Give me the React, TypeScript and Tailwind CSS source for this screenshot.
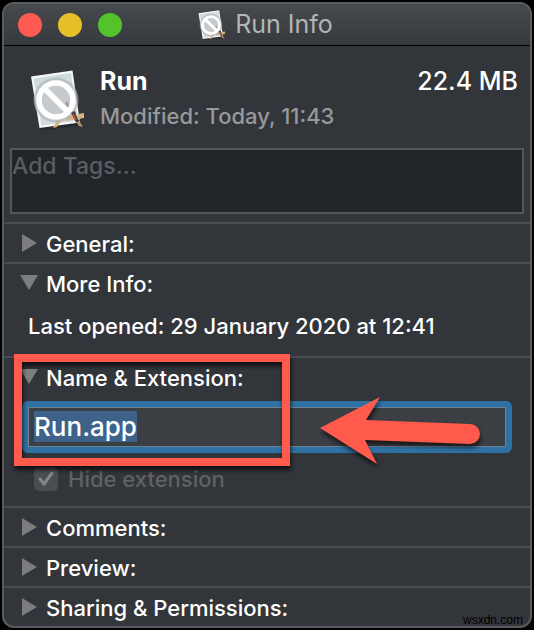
import { useEffect, useRef, type ReactNode } from "react";

function AppIcon({ className }: { className: string }) {
  return (
    <svg viewBox="0 0 60 64" className={className} aria-hidden="true">
      <path d="M3 9.500 44 3.500 52 56 12 61Z" fill="#111417" opacity=".35" transform="translate(1 1.500)" />
      <path d="M3 8.500 44.500 2.500 52 54.500 11.500 60Z" fill="#f5f7f8" />
      <path d="M5.500 10.500 43 5 49.500 52.500 13.500 57.500Z" fill="#cfdbe1" />
      <path d="M25 60 31 49 35 50 29 59ZM39 48 56 45V50L38 53Z" fill="#d9b27c" />
      <circle cx="28" cy="32" r="22.500" fill="#aeb3b6" opacity=".65" />
      <circle cx="28" cy="32" r="17" fill="#c6cacd" />
      <path d="m38 34 7 12" stroke="#a39a9b" strokeWidth="2.500" />
      <path d="m32 48 4-7" stroke="#c9b8a0" strokeWidth="2" />
      <circle cx="28" cy="32" r="17" fill="none" stroke="#fff" strokeWidth="5.500" />
      <path d="M16 20 40 44" stroke="#fff" strokeWidth="5.500" />
      <path d="m45 44 5 10" stroke="#493d3c" strokeWidth="4" />
      <path d="m45 46 3 6" stroke="#c8563e" strokeWidth="1.500" />
      <path d="m48 46 3 6" stroke="#dde3e6" strokeWidth="1" />
      <path d="m48 54 4 0 3 5-4-1Z" fill="#b59464" />
    </svg>
  );
}

function Section({ title, open = false, children }: { title: string; open?: boolean; children?: ReactNode }) {
  return (
    <section className="relative border-t-2 border-[#4a4d51]">
      <h2>
        <button type="button" aria-expanded={open} className="flex h-[38px] w-full items-center gap-2 pl-4 text-left text-[22px] font-medium leading-7">
          <svg viewBox="0 0 18 18" className="size-[18px] shrink-0" fill="#7d7d7e" aria-hidden="true">
            {open ? <path d="M0 1h18L9 16Z" /> : <path d="M2 0v18L17 9Z" />}
          </svg>
          <span className="pt-0.5">{title}</span>
        </button>
      </h2>
      {children}
    </section>
  );
}

export default function App() {
  const nameRef = useRef<HTMLInputElement>(null);

  useEffect(() => {
    nameRef.current?.focus();
    nameRef.current?.select();
  }, []);

  return (
    <div className="min-h-screen bg-black p-0.5 font-['Inter','Liberation_Sans',sans-serif] text-white">
      <main className="relative overflow-hidden rounded-xl border-2 border-[#5b5c60] bg-[#323539]">
        <header className="relative flex h-[42px] items-center justify-center border-b border-black bg-linear-to-b from-[#464a4d] to-[#36393d] pr-1">
          <div className="absolute left-3.5 flex gap-4">
            <button type="button" aria-label="Close" className="size-6 rounded-full bg-[#ff5a52]" />
            <button type="button" aria-label="Minimise" className="size-6 rounded-full bg-[#e6c029]" />
            <button type="button" aria-label="Zoom" className="size-6 rounded-full bg-[#53c22b]" />
          </div>
          <AppIcon className="mr-2 h-8 w-[30px]" />
          <h1 className="text-[25px] text-[#b3b5b7]">Run Info</h1>
        </header>

        <div className="flex h-[102px] items-start pl-6 pr-3 pt-[18px]">
          <AppIcon className="mr-3 mt-1 h-16 w-[60px] shrink-0" />
          <div className="grow">
            <div className="flex justify-between text-[25px] leading-[34px]">
              <strong className="font-bold">Run</strong>
              <span className="font-medium">22.4 MB</span>
            </div>
            <p className="text-[22px] font-medium leading-9 text-[#98999b]">Modified: Today, 11:43</p>
          </div>
        </div>

        <textarea
          aria-label="Tags"
          placeholder="Add Tags..."
          className="mx-1.5 mb-2 block h-[66px] w-[calc(100%-12px)] resize-none border-2 border-[#545659] bg-[#212428] text-[23px] font-medium leading-8 placeholder:text-[#5b5d60] focus:outline-none"
        />

        <Section title="General:" />
        <Section title="More Info:" open>
          <p className="h-[54px] pl-6 text-[22px] font-medium leading-[48px]">Last opened: 29 January 2020 at 12:41</p>
        </Section>
        <Section title="Name & Extension:" open>
          <div className="mx-[18px] mt-[5px] rounded-md bg-[#2e71a3] p-1.5">
            <input
              ref={nameRef}
              aria-label="Name"
              defaultValue="Run.app"
              className="block h-10 w-full border border-[#6e8394] bg-[#3b3e42] px-[5px] pb-0.5 text-[26px] font-medium leading-8 selection:bg-[#3f638b]/99 selection:text-white focus:outline-none"
            />
          </div>
          <label className="mb-[15px] mt-3.5 flex h-6 items-center gap-2.5 pl-[30px] text-[22px] font-medium text-[#5f6164]">
            <span className="relative flex size-6">
              <input type="checkbox" defaultChecked disabled className="size-6 appearance-none rounded-[5px] bg-[#4b4d51]" />
              <svg viewBox="0 0 24 24" className="absolute inset-0" fill="none" stroke="#85878a" strokeWidth="3" strokeLinecap="round" strokeLinejoin="round" aria-hidden="true">
                <path d="m6 12 4 5 8-11" />
              </svg>
            </span>
            Hide extension
          </label>
          <div className="pointer-events-none absolute -top-1 left-2.5 h-28 w-[276px] border-8 border-[#ff5a4c] drop-shadow-[1px_4px_2px_rgba(0,0,0,0.7)]" />
          <svg viewBox="0 0 162 70" className="pointer-events-none absolute left-[315px] top-9 h-[70px] w-[162px] overflow-visible drop-shadow-[1px_4px_2px_rgba(0,0,0,0.6)]" fill="#ff5a4c" aria-hidden="true">
            <path d="M1 34 61 3 47 26 151 30a10 10 0 0 1 0 20L46 46 58 70Z" />
          </svg>
        </Section>
        <Section title="Comments:" />
        <Section title="Preview:" />
        <Section title="Sharing & Permissions:" />
        <span className="absolute bottom-0 right-[7px] font-['Liberation_Sans',sans-serif] text-xs leading-3 text-black">wsxdn.com</span>
      </main>
    </div>
  );
}
